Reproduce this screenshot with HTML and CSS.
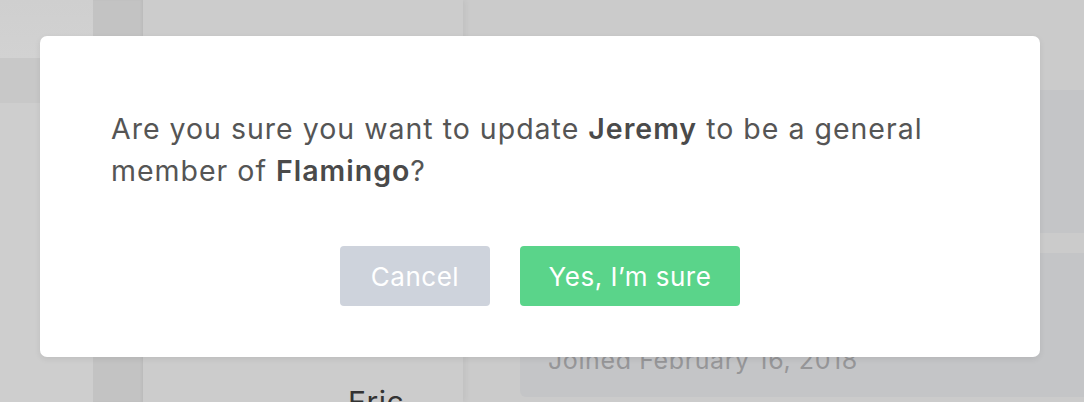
FILE: index.html
```html
<!DOCTYPE html>
<html lang="en">
<head>
<meta charset="utf-8">
<title>Confirm role change</title>
<link rel="stylesheet" href="styles.css">
</head>
<body>
<div class="app">
  <aside class="sidebar">
    <div class="sb-top"></div>
    <div class="sb-band"></div>
    <div class="sb-rest"></div>
  </aside>
  <div class="strip"></div>
  <section class="list">
    <div class="list-name">Eric</div>
  </section>
  <main class="main">
    <div class="card card-a"></div>
    <div class="card card-b">
      <div class="joined">Joined February 16, 2018</div>
    </div>
  </main>
</div>
<div class="modal">
  <p class="question">Are you sure you want to update <strong>Jeremy</strong> to be a general member of <strong>Flamingo</strong>?</p>
  <div class="actions">
    <button class="btn btn-cancel">Cancel</button>
    <button class="btn btn-confirm">Yes, I’m sure</button>
  </div>
</div>
</body>
</html>
```
FILE: styles.css
```css
html, body {
  margin: 0;
  padding: 0;
}
body {
  width: 1084px;
  height: 402px;
  overflow: hidden;
  position: relative;
  background: #cccccc;
  font-family: Inter, "Noto Sans", sans-serif;
}
.app {
  display: flex;
  height: 402px;
}
.sidebar {
  width: 93px;
  display: flex;
  flex-direction: column;
  background: #cfcfcf;
}
.sb-top {
  height: 58px;
  background: linear-gradient(#cfcfcf, #d2d2d2);
}
.sb-band {
  height: 45px;
  background: #c8c8c8;
}
.sb-rest {
  flex: 1;
  background: #cecece;
}
.strip {
  width: 50px;
  background: #c3c3c3;
  box-shadow: inset -2px 0 2px rgba(0,0,0,0.03);
}
.list {
  width: 320px;
  background: #cccccc;
  box-shadow: 3px 0 6px rgba(0,0,0,0.05);
  position: relative;
}
.list-name {
  position: absolute;
  left: 205px;
  top: 384px;
  font-size: 30px;
  letter-spacing: 0.5px;
  color: #333333;
}
.main {
  flex: 1;
  display: flex;
  flex-direction: column;
  padding: 90px 0 5px 57px;
  gap: 20px;
  background: #cbcbcb;
}
.card {
  background: #c4c5c7;
  border-radius: 6px 0 0 6px;
}
.card-a {
  height: 143px;
}
.card-b {
  flex: 1;
  padding: 0 0 22px 28px;
  display: flex;
  align-items: flex-end;
}
.joined {
  font-size: 25px;
  letter-spacing: 0.6px;
  color: #969698;
}
.modal {
  position: absolute;
  left: 40px;
  top: 36px;
  width: 1000px;
  height: 321px;
  box-sizing: border-box;
  background: #ffffff;
  border-radius: 7px;
  box-shadow: 0 2px 6px rgba(0,0,0,0.08);
  padding: 72px 71px 0 71px;
}
.question {
  margin: 0;
  font-size: 28.5px;
  letter-spacing: 1px;
  line-height: 42px;
  color: #555555;
  max-width: 850px;
}
.question strong {
  font-weight: 600;
  color: #4a4a4a;
}
.actions {
  display: flex;
  justify-content: center;
  gap: 30px;
  margin-top: 54px;
}
.btn {
  height: 60px;
  border: none;
  border-radius: 4px;
  color: #ffffff;
  font-family: Inter, "Noto Sans", sans-serif;
  font-size: 26px;
  letter-spacing: 0.5px;
  padding: 0;
}
.btn-cancel {
  width: 150px;
  background: #ced3dc;
}
.btn-confirm {
  width: 220px;
  background: #5ad48a;
}
```
